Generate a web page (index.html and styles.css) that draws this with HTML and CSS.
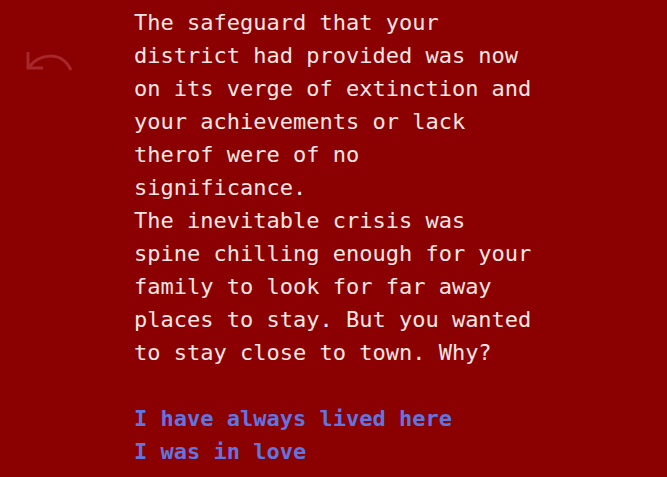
FILE: index.html
```html
<!DOCTYPE html>
<html>
<head>
<meta charset="utf-8">
<link rel="stylesheet" href="styles.css">
</head>
<body>
<div class="page">
  <div class="back">
    <svg width="48" height="26" viewBox="0 0 48 26" fill="none" stroke="#a7272c" stroke-width="3" stroke-linejoin="miter">
      <path d="M3 4 V20 H18"/>
      <path d="M4 19 C 14 6, 36 2, 46 22"/>
    </svg>
  </div>
  <div class="story">
    <p class="text">The safeguard that your district had provided was now on its verge of extinction and your achievements or lack therof were of no significance.<br>The inevitable crisis was spine chilling enough for your family to look for far away places to stay. But you wanted to stay close to town. Why?</p>
    <ul class="choices">
      <li><a class="choice" href="#">I have always lived here</a></li>
      <li><a class="choice" href="#">I was in love</a></li>
    </ul>
  </div>
</div>
</body>
</html>
```
FILE: styles.css
```css
html, body {
  margin: 0;
  padding: 0;
  background: #8b0000;
  height: 100%;
  overflow: hidden;
}
.page {
  display: flex;
  padding-left: 25px;
  font-family: "DejaVu Sans Mono", "Liberation Mono", monospace;
  font-size: 22px;
  line-height: 33px;
  color: #f6e6e4;
}
.back {
  width: 48px;
  padding-top: 48px;
  flex: none;
}
.back svg {
  display: block;
}
.story {
  margin-left: 61px;
  padding-top: 6px;
  width: 404px;
}
.text {
  margin: 0;
}
.choices {
  list-style: none;
  margin: 33px 0 0;
  padding: 0;
}
.choice {
  color: #6175e0;
  font-weight: bold;
  text-decoration: none;
}
```
